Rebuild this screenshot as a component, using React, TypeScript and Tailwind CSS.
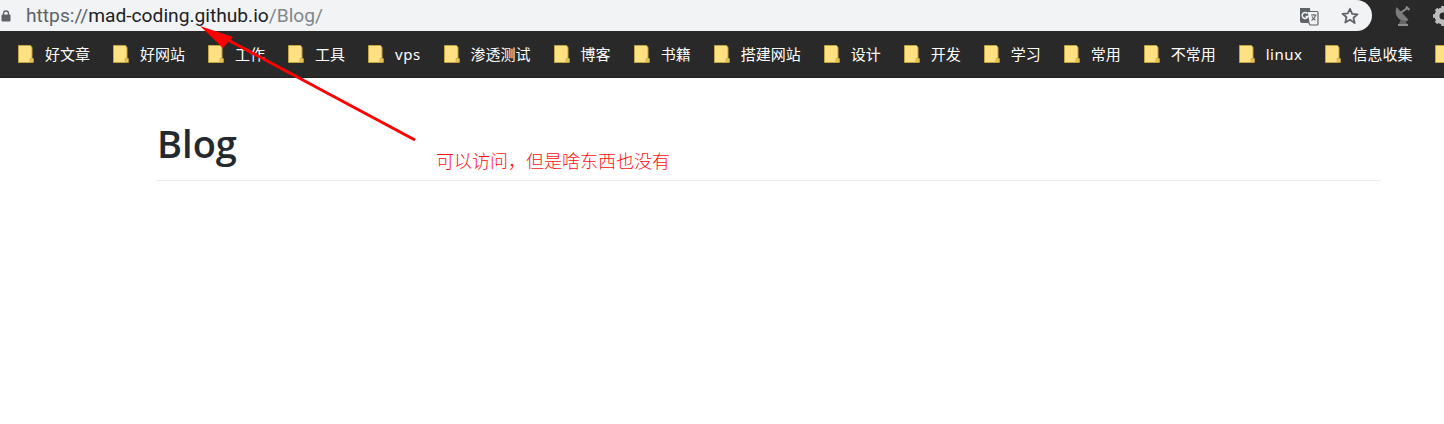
import React from 'react';

const bookmarks = ['好文章', '好网站', '工作', '工具', 'vps', '渗透测试', '博客', '书籍', '搭建网站', '设计', '开发', '学习', '常用', '不常用', 'linux', '信息收集', ''];

const Folder = () => (
  <svg width="16" height="18" viewBox="0 0 16 18" className="shrink-0">
    <path d="M.5.500h12l1.500 2v13l-1 2H.5z" fill="#fde183" stroke="#c2a33f" strokeWidth="1" />
    <path d="M12 13.500h3.500v4H12z" fill="#e9c659" stroke="#c2a33f" strokeWidth=".6" />
  </svg>
);

const Translate = () => (
  <svg width="20" height="20" viewBox="0 0 20 20" className="shrink-0">
    <path d="M1 2h10l1 15H3a2 2 0 0 1-2-2z" fill="#5f6368" />
    <path d="M8 5.500h10a1 1 0 0 1 1 1V18a1 1 0 0 1-1 1h-7l-1-2z" fill="#f1f3f4" stroke="#5f6368" strokeWidth="1.200" />
    <path d="M8.500 7.500a3 3 0 1 0 .5 3H6.500" fill="none" stroke="#f1f3f4" strokeWidth="1.500" />
    <path d="M12 9h5.500M14.700 8v1M16.500 9c-.5 2.500-2 4.500-4 5.500M13 10.500c.7 1.500 2 3 3.500 3.800" fill="none" stroke="#5f6368" strokeWidth="1.100" />
  </svg>
);

const Star = () => (
  <svg width="20" height="20" viewBox="0 0 20 20" className="shrink-0">
    <path d="M10 2.800l2.200 5 5.300.5-4 3.500 1.200 5.300L10 13.800l-4.700 2.800 1.200-5.300-4-3.500 5.300-.5z" fill="none" stroke="#5f6368" strokeWidth="1.800" strokeLinejoin="round" />
  </svg>
);

const Satellite = () => (
  <svg width="16" height="20" viewBox="0 0 16 20" className="shrink-0">
    <path d="M1.500 1C-.5 6 1 12 6.500 14.500c3 1.300 5.500.8 7-.8z" fill="#7b7b7b" />
    <path d="M6 6.500L12.500 2M11 .5l3.500 3.500" stroke="#8c8c8c" strokeWidth="2" fill="none" />
    <path d="M5.500 14l-1.500 4h8l-1.500-3.500z" fill="#666" />
    <path d="M3 18h10v2H3z" fill="#8f8f8f" />
  </svg>
);

const Gear = () => (
  <svg width="22" height="22" viewBox="0 0 22 22" className="shrink-0">
    <circle cx="11" cy="11" r="6" fill="none" stroke="#bdbdbd" strokeWidth="5" />
    <path d="M11 1v4M11 17v4M1 11h4M17 11h4M4 4l3 3M15 15l3 3M18 4l-3 3M7 15l-3 3" stroke="#bdbdbd" strokeWidth="3.500" />
  </svg>
);

export default function App() {
  return (
    <div className="relative h-[424px] w-[1444px] overflow-hidden bg-white font-['Noto_Sans','Noto_Sans_CJK_SC',sans-serif]">
      {/* Browser chrome */}
      <div className="flex h-[31px] bg-[#292929]">
        <div className="flex w-[1372px] shrink-0 items-center rounded-br-[16px] rounded-tr-[16px] bg-[#f1f3f4] pl-px">
          <svg width="10" height="12" viewBox="0 0 10 12" className="shrink-0">
            <path d="M2.500 5V3.500a2.500 2.500 0 0 1 5 0V5" fill="none" stroke="#5f6368" strokeWidth="1.300" />
            <rect x="0.500" y="4.500" width="9" height="7" rx="1" fill="#5f6368" />
          </svg>
          <div className="ml-[15px] flex-1 whitespace-nowrap font-['Roboto',sans-serif] text-[19.200px] leading-[28px] text-[#5f6368]">
            https://<span className="text-[#202124]">mad-coding.github.io</span><span className="text-[#80868b]">/Blog/</span>
          </div>
          <div className="mr-[12px] flex items-center gap-[21px]">
            <Translate />
            <Star />
          </div>
        </div>
        <div className="flex shrink-0 items-center gap-[21px] pl-[23px]">
          <Satellite />
          <Gear />
        </div>
      </div>

      {/* Bookmarks */}
      <div className="flex h-[47px] items-center gap-[23px] whitespace-nowrap border-b border-b-[#1f1f1f] bg-[#292929] pb-px pl-[18px]">
        {bookmarks.map((name, i) => (
          <div key={i} className="flex shrink-0 items-center gap-[11px] text-[15px] leading-5 text-white">
            <Folder />
            {name && <span className={name === 'vps' || name === 'linux' ? 'tracking-[0.5px]' : ''}>{name}</span>}
          </div>
        ))}
      </div>

      {/* Page */}
      <div className="ml-[156px] mr-[63px] mt-[38px] border-b border-b-[#eaecef] pb-[9px] pl-px">
        <h1 className="text-[38px] font-semibold leading-[55px] text-[#24292e] font-['Open_Sans',sans-serif]">Blog</h1>
      </div>

      {/* Annotation */}
      <svg width="1444" height="424" className="absolute left-0 top-0">
        <path d="M415 140L228 40" stroke="#ff0000" strokeWidth="3" />
        <path d="M200 26L233 37L223 48z" fill="#ff0000" />
      </svg>
      <div className="absolute left-[436px] top-[147px] whitespace-nowrap text-[18px] leading-[26px] text-[#ff1010] font-['Noto_Sans_CJK_SC',serif] font-light">
        可以访问，但是啥东西也没有
      </div>
    </div>
  );
}
